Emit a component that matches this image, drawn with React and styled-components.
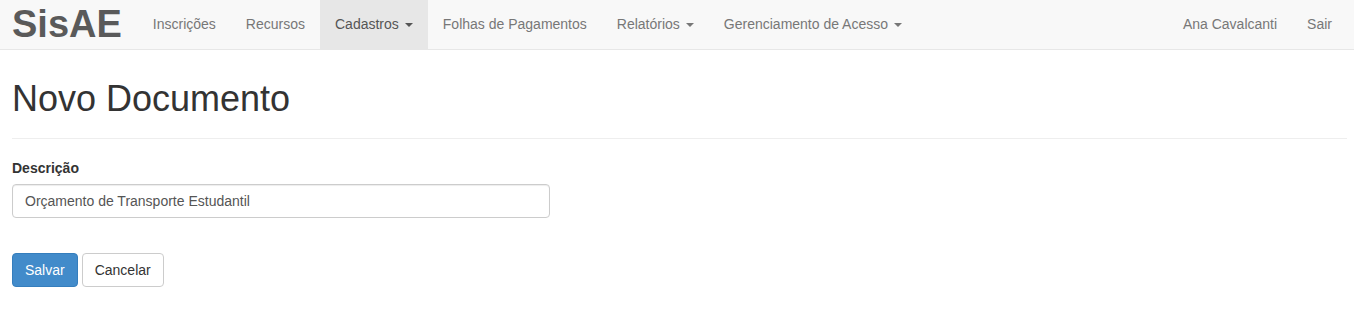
import styled, { createGlobalStyle } from 'styled-components';

const GlobalStyle = createGlobalStyle`
    * {
        box-sizing: border-box;
    }
    body {
        margin: 0;
        background: #fff;
        font-family: 'Liberation Sans', Arial, Helvetica, sans-serif;
        font-size: 14px;
        line-height: 1.42857;
        color: #333;
    }
`;

const Navbar = styled.nav`
    display: flex;
    align-items: stretch;
    height: 50px;
    padding: 0 7px 0 0;
    background: #f8f8f8;
    border-bottom: 1px solid #e7e7e7;
`;

const Brand = styled.a`
    display: flex;
    align-items: center;
    padding: 0 16px 0 12px;
    font-size: 38px;
    font-weight: bold;
    color: #5a5a5a;
    text-decoration: none;
`;

const Nav = styled.ul`
    display: flex;
    margin: 0;
    padding: 0;
    list-style: none;
    margin-left: ${(p) => (p.$right ? 'auto' : '0')};
`;

const NavLink = styled.a`
    display: flex;
    align-items: center;
    height: 49px;
    padding: 0 15px;
    color: ${(p) => (p.$active ? '#555' : '#777')};
    background: ${(p) => (p.$active ? '#e7e7e7' : 'transparent')};
    text-decoration: none;
    white-space: nowrap;
`;

const Caret = styled.span`
    display: inline-block;
    width: 0;
    height: 0;
    margin-left: 6px;
    border-top: 4px solid;
    border-right: 4px solid transparent;
    border-left: 4px solid transparent;
`;

const Content = styled.main`
    padding: 29px 7px 0 12px;
`;

const PageHeader = styled.div`
    padding-bottom: 9px;
    border-bottom: 1px solid #eee;
    margin-bottom: 20px;

    h1 {
        margin: 0 0 10px;
        font-size: 36px;
        font-weight: 500;
        line-height: 1.1;
        color: #333;
    }
`;

const FormGroup = styled.div`
    margin-bottom: 35px;
`;

const Label = styled.label`
    display: block;
    margin-bottom: 5px;
    font-weight: bold;
`;

const Input = styled.input`
    display: block;
    width: 538px;
    height: 34px;
    padding: 6px 12px;
    font-family: inherit;
    font-size: 14px;
    color: #555;
    background: #fff;
    border: 1px solid #ccc;
    border-radius: 4px;
    box-shadow: inset 0 1px 1px rgba(0, 0, 0, 0.075);
    outline: none;
`;

const Actions = styled.div`
    display: flex;
    gap: 4px;
`;

const Button = styled.button`
    height: 34px;
    padding: 6px 12px;
    font-family: inherit;
    font-size: 14px;
    line-height: 20px;
    border-radius: 4px;
    border: 1px solid ${(p) => (p.$primary ? '#357ebd' : '#ccc')};
    background: ${(p) => (p.$primary ? '#428bca' : '#fff')};
    color: ${(p) => (p.$primary ? '#fff' : '#333')};
    cursor: pointer;
`;

const leftLinks = [
    { label: 'Inscrições' },
    { label: 'Recursos' },
    { label: 'Cadastros', dropdown: true, active: true },
    { label: 'Folhas de Pagamentos' },
    { label: 'Relatórios', dropdown: true },
    { label: 'Gerenciamento de Acesso', dropdown: true },
];

export default function App() {
    return (
        <>
            <GlobalStyle />
            <Navbar>
                <Brand href="#">SisAE</Brand>
                <Nav>
                    {leftLinks.map((l) => (
                        <li key={l.label}>
                            <NavLink href="#" $active={l.active}>
                                {l.label}
                                {l.dropdown && <Caret />}
                            </NavLink>
                        </li>
                    ))}
                </Nav>
                <Nav $right>
                    <li>
                        <NavLink href="#">Ana Cavalcanti</NavLink>
                    </li>
                    <li>
                        <NavLink href="#">Sair</NavLink>
                    </li>
                </Nav>
            </Navbar>
            <Content>
                <PageHeader>
                    <h1>Novo Documento</h1>
                </PageHeader>
                <FormGroup>
                    <Label htmlFor="descricao">Descrição</Label>
                    <Input
                        id="descricao"
                        defaultValue="Orçamento de Transporte Estudantil"
                    />
                </FormGroup>
                <Actions>
                    <Button $primary>Salvar</Button>
                    <Button>Cancelar</Button>
                </Actions>
            </Content>
        </>
    );
}
